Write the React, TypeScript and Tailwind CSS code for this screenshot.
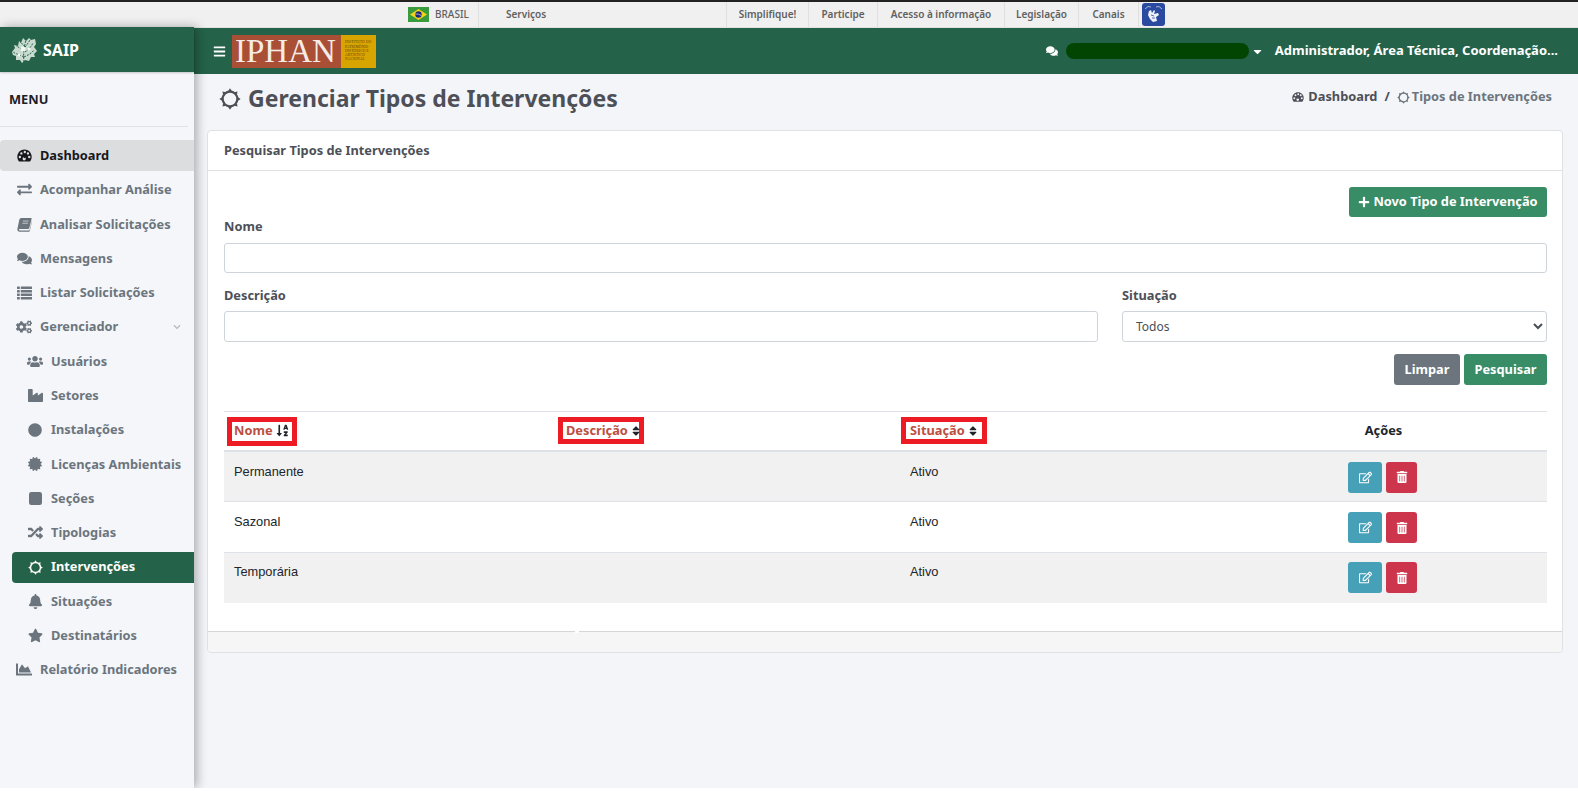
import type { ReactNode } from "react";
import {
  FaBars,
  FaBell,
  FaCertificate,
  FaChartArea,
  FaCircle,
  FaCogs,
  FaComments,
  FaExchangeAlt,
  FaIndustry,
  FaPlus,
  FaRandom,
  FaRegEdit,
  FaSort,
  FaSortAlphaDown,
  FaStar,
  FaTrashAlt,
  FaUsers,
  FaCaretDown,
  FaChevronDown,
} from "react-icons/fa";

function SunIcon({ className }: { className?: string }) {
  return (
    <svg viewBox="0 0 24 24" className={className} fill="currentColor">
      <circle cx="12" cy="12" r="8" fill="none" stroke="currentColor" strokeWidth="2.4" />
      {[0, 45, 90, 135, 180, 225, 270, 315].map((a) => (
        <path key={a} d="M9.8 3.6 L12 0.4 L14.2 3.6 Z" transform={`rotate(${a} 12 12)`} />
      ))}
    </svg>
  );
}

function GaugeIcon({ className }: { className?: string }) {
  const hole = (cx: number, cy: number, r: number) =>
    `M${cx - r} ${cy} a${r} ${r} 0 1 0 ${2 * r} 0 a${r} ${r} 0 1 0 ${-2 * r} 0Z `;
  const d =
    "M12 2.5 C5.6 2.5 .5 7.6 .5 14 c0 2.6 .9 5 2.4 7 .3 .4 .7 .5 1.1 .5 h16 c.4 0 .8 -.1 1.1 -.5 1.5 -2 2.4 -4.4 2.4 -7 C23.5 7.6 18.4 2.5 12 2.5Z " +
    hole(4.6, 14.5, 1.9) +
    hole(7, 8.6, 1.9) +
    hole(12.5, 6.4, 1.9) +
    hole(17.5, 8.6, 1.9) +
    hole(19.6, 14.5, 1.9) +
    hole(11.5, 17.2, 2.6);
  return (
    <svg viewBox="0 0 24 24" className={className} fill="currentColor">
      <path fillRule="evenodd" d={d} />
      <path d="M10.6 15.5 L13 9 L14 9.4 L12.6 16.2 Z" />
    </svg>
  );
}

function BookIcon({ className }: { className?: string }) {
  return (
    <svg viewBox="0 0 24 24" className={className} fill="currentColor">
      <path d="M7 1.5 H22.5 C23.3 1.5 23.6 2.1 23.4 2.8 L19.6 18 C19.4 18.8 18.9 19.2 18 19.2 H4.5 C3.4 19.2 3.1 19.8 3.2 20.4 C3.3 21 3.9 21.4 4.8 21.4 H20 L23.8 6 L24 6.8 L20.5 22.3 C20.3 23 19.8 23.4 19 23.4 H4.5 C2 23.4 .4 21.7 .6 19 L3.7 4.5 C4.1 2.6 5.3 1.5 7 1.5Z" />
      <path d="M9.5 6.5 H18.5 M8.5 10 H17.5" stroke="#f4f6fa" strokeWidth="1" />
    </svg>
  );
}

function ListIcon({ className }: { className?: string }) {
  return (
    <svg viewBox="0 0 24 24" className={className} fill="currentColor">
      {[2.5, 8, 13.5, 19].map((y) => (
        <g key={y}>
          <rect x="0" y={y} width="4.5" height="4" rx="0.6" />
          <rect x="6" y={y} width="18" height="4" rx="0.6" />
        </g>
      ))}
    </svg>
  );
}

function RoundSquareIcon({ className }: { className?: string }) {
  return (
    <svg viewBox="0 0 14 14" className={className} fill="currentColor">
      <rect width="14" height="14" rx="2.5" />
    </svg>
  );
}

function LeafLogo() {
  return (
    <svg viewBox="0 0 26 26" className="h-[26px] w-[26px]">
      <path
        d="M1 15 L4 11 L3 8 L7 9 L8 4 L10 6 L12 1 L15 4 L18 1 L20 3 L24 2 L25 7 L23 10 L26 14 L23 17 L24 20 L20 20 L18 24 L14 23 L11 26 L9 23 L5 23 L5 19 L2 18 Z"
        fill="#c9dbd1"
      />
      <path
        d="M13 25 C12 18 13 10 15 3 M13 20 C9 18 5 17 2 15 M13 15 C10 12 8 10 5 9 M14 10 C12 8 11 6 9 5 M13 20 C17 18 20 17 23 13 M14 15 C17 13 20 10 22 6 M14 10 C16 8 17 6 19 3"
        fill="none"
        stroke="#246349"
        strokeWidth="1"
        strokeDasharray="2 1.2"
      />
      <circle cx="12" cy="12" r="2.5" fill="#f2f7f4" />
      <circle cx="18" cy="12" r="1.5" fill="#f2f7f4" />
      <circle cx="8" cy="18" r="1.5" fill="#f2f7f4" />
    </svg>
  );
}

function FlagBrasil() {
  return (
    <svg viewBox="0 0 21 15" className="h-[15px] w-[21px]">
      <rect width="21" height="15" fill="#3a9b3c" />
      <path d="M10.5 2 L19 7.5 L10.5 13 L2 7.5 Z" fill="#f2d21b" />
      <circle cx="10.5" cy="7.5" r="3.2" fill="#1c2a78" />
      <path d="M7.5 7 Q10.5 6.6 13.4 8.6" stroke="#fff" strokeWidth="0.6" fill="none" />
    </svg>
  );
}

function HandTalk() {
  return (
    <svg viewBox="0 0 23 23" className="h-[23px] w-[23px]">
      <rect width="23" height="23" rx="3" fill="#2a4aa0" />
      <path d="M3 6 Q6 2 9 4 M14 4 Q17 2 20 6" stroke="#dfe6f7" strokeWidth="0.7" fill="none" />
      <path d="M7 8 L9 7 L10 10 L12 7 L13 8 L12 11 L16 10 L17 12 L14 14 L15 18 L11 19 L8 16 L6 12 Z" fill="#eef1fa" />
      <path d="M9 12 L12 13 M10 15 L13 15" stroke="#2a4aa0" strokeWidth="0.8" />
    </svg>
  );
}

const govLinks = [
  { label: "Simplifique!", w: "w-[82px]" },
  { label: "Participe", w: "w-[69px]" },
  { label: "Acesso à informação", w: "w-[127px]" },
  { label: "Legislação", w: "w-[74px]" },
  { label: "Canais", w: "w-[60px]" },
];

function GovBar() {
  return (
    <div className="flex h-[27px] border-t-2 border-[#222222] bg-[#f0f0f0] pl-[400px] text-[10px] font-semibold text-[#606060]">
      <div className="flex w-[79px] items-center gap-[6px] border-r border-[#dfdfdf] pl-2">
        <FlagBrasil />
        <span className="font-medium">BRASIL</span>
      </div>
      <div className="flex w-[248px] items-center border-r border-[#dfdfdf] pl-[27px]">Serviços</div>
      {govLinks.map((l) => (
        <div key={l.label} className={`flex items-center justify-center border-r border-[#dfdfdf] ${l.w}`}>
          {l.label}
        </div>
      ))}
      <div className="flex items-center pl-[3px]">
        <HandTalk />
      </div>
    </div>
  );
}

type NavItem = { label: string; icon: ReactNode; sub?: boolean; active?: boolean; current?: boolean; chevron?: boolean };

const navItems: NavItem[] = [
  { label: "Dashboard", icon: <GaugeIcon className="h-[15px] w-[15px]" />, current: true },
  { label: "Acompanhar Análise", icon: <FaExchangeAlt className="text-[15px]" /> },
  { label: "Analisar Solicitações", icon: <BookIcon className="h-[15px] w-[15px]" /> },
  { label: "Mensagens", icon: <FaComments className="text-[15px]" /> },
  { label: "Listar Solicitações", icon: <ListIcon className="h-[15px] w-[15px]" /> },
  { label: "Gerenciador", icon: <FaCogs className="text-[16px]" />, chevron: true },
  { label: "Usuários", icon: <FaUsers className="text-[17px]" />, sub: true },
  { label: "Setores", icon: <FaIndustry className="text-[15px]" />, sub: true },
  { label: "Instalações", icon: <FaCircle className="text-[14px]" />, sub: true },
  { label: "Licenças Ambientais", icon: <FaCertificate className="text-[14px]" />, sub: true },
  { label: "Seções", icon: <RoundSquareIcon className="h-[13px] w-[13px]" />, sub: true },
  { label: "Tipologias", icon: <FaRandom className="text-[15px]" />, sub: true },
  { label: "Intervenções", icon: <SunIcon className="h-[15px] w-[15px]" />, sub: true, active: true },
  { label: "Situações", icon: <FaBell className="text-[15px]" />, sub: true },
  { label: "Destinatários", icon: <FaStar className="text-[15px]" />, sub: true },
  { label: "Relatório Indicadores", icon: <FaChartArea className="text-[17px]" /> },
];

function SideNavLink({ item }: { item: NavItem }) {
  const tone = item.active
    ? "bg-[#246349] text-white"
    : item.current
      ? "bg-[#dcdddf] text-[#16181b]"
      : "text-[#6c757d]";
  return (
    <div className={`mb-[3.3px] flex h-[31px] items-center rounded-l-[4px] ${item.sub ? "ml-3 pl-[3px]" : "pl-4"} ${tone}`}>
      <span className={`flex w-[16px] justify-center ${item.sub ? "ml-[12px]" : ""}`}>{item.icon}</span>
      <span className="ml-[8px] text-[12.8px] font-bold">{item.label}</span>
      {item.chevron ? <FaChevronDown className="ml-auto mr-[13px] text-[8px] text-[#b4b8bd]" /> : null}
    </div>
  );
}

function Sidebar() {
  return (
    <aside className="relative z-10 w-[194px] shrink-0 bg-[#f4f6fa] shadow-[3px_0_10px_rgba(0,0,0,0.3)]">
      <div className="flex h-[45px] items-center gap-[6px] bg-[#246349] pl-[11px] text-white shadow-[0_1px_2px_rgba(0,0,0,0.2)]">
        <LeafLogo />
        <span className="text-[16px] font-bold">SAIP</span>
      </div>
      <div className="mr-[6px] flex h-[55px] items-center border-b border-[#dfe1e6] pl-[9px] pt-[2px] text-[12.8px] font-bold text-[#1d2027]">
        MENU
      </div>
      <nav className="pt-[13px]">
        {navItems.map((item) => (
          <SideNavLink key={item.label} item={item} />
        ))}
      </nav>
    </aside>
  );
}

function TopHeader() {
  return (
    <header className="flex h-[46px] items-center bg-[#246349] pl-[19px] pr-[20px] text-white">
      <FaBars className="text-[13px]" />
      <div className="ml-[6px] flex h-[33px] w-[144px]">
        <div className="flex w-[109px] items-center bg-[#a94f35] pl-[3px] text-[33px] leading-none text-[#f6ece6] [font-family:'Liberation_Serif',serif]">
          IPHAN
        </div>
        <div className="flex w-[35px] flex-col justify-center bg-[#d8a500] pl-[4px] text-[3.5px] leading-[4.2px] tracking-[0.2px] text-[#5b4210] [font-family:'Liberation_Serif',serif]">
          <span>INSTITUTO DO</span>
          <span>PATRIMÔNIO</span>
          <span>HISTÓRICO E</span>
          <span>ARTÍSTICO</span>
          <span>NACIONAL</span>
        </div>
      </div>
      <div className="ml-auto flex items-center">
        <FaComments className="text-[12px]" />
        <div className="ml-[8px] h-[16px] w-[183px] rounded-full bg-[#024502]" />
        <FaCaretDown className="ml-[2px] text-[13px]" />
        <span className="ml-[11px] text-[13px] font-bold">Administrador, Área Técnica, Coordenação...</span>
      </div>
    </header>
  );
}

function TitleRow() {
  return (
    <div className="flex h-[56px] items-center justify-between pb-[7px] pl-[12px] pr-[11px] text-[#4d5057]">
      <h1 className="flex items-center text-[23px] font-bold">
        <SunIcon className="mr-[7px] h-[22px] w-[22px]" />
        Gerenciar Tipos de Intervenções
      </h1>
      <div className="mb-[3px] flex items-center text-[12.8px] font-bold">
        <GaugeIcon className="mr-[4px] h-[12px] w-[12px]" />
        <span>Dashboard</span>
        <span className="mx-[7px]">/</span>
        <SunIcon className="mr-[2px] h-[13px] w-[13px] text-[#6c757d]" />
        <span className="text-[#6c757d]">Tipos de Intervenções</span>
      </div>
    </div>
  );
}

const inputClass = "w-full rounded-[3px] border border-[#ced4da] bg-white";

function SortBox({ label, icon, box, gap }: { label: string; icon: ReactNode; box: string; gap: string }) {
  return (
    <span className={`inline-flex items-center border-[5px] border-[#ed1c24] ${box}`}>
      <span className="text-[12.8px] font-bold leading-none text-[#bd4f42]">{label}</span>
      <span className={`text-[#20242a] ${gap}`}>{icon}</span>
    </span>
  );
}

const rows = [
  { nome: "Permanente", situacao: "Ativo", row: "h-[51px] bg-[#f1f1f1]", pad: "pt-[10px]" },
  { nome: "Sazonal", situacao: "Ativo", row: "h-[51px] bg-white", pad: "pt-[10px]" },
  { nome: "Temporária", situacao: "Ativo", row: "h-[50px] bg-[#f1f1f1]", pad: "pt-[9px]" },
];

function ResultTable() {
  return (
    <table className="mt-[26px] w-full table-fixed border-collapse border-t border-[#dee2e6]">
      <colgroup>
        <col className="w-[331px]" />
        <col className="w-[345px]" />
        <col className="w-[322px]" />
        <col />
      </colgroup>
      <thead>
        <tr className="h-[39px] border-b-2 border-[#dee2e6]">
          <th className="pl-[3px] text-left align-middle">
            <SortBox label="Nome" gap="ml-[3px]" box="mt-[2px] h-[29px] w-[70px] pb-[3px] pl-[2px]" icon={<FaSortAlphaDown className="text-[13px]" />} />
          </th>
          <th className="pl-[3px] text-left align-middle">
            <SortBox label="Descrição" gap="ml-[2px]" box="h-[27px] w-[86px] pl-[3px]" icon={<FaSort className="text-[12px]" />} />
          </th>
          <th className="pl-[1px] text-left align-middle">
            <SortBox label="Situação" gap="ml-[2px]" box="h-[27px] w-[86px] pl-[4px]" icon={<FaSort className="text-[12px]" />} />
          </th>
          <th className="pr-[2px] text-center align-middle text-[12.8px] font-bold text-[#212529]">Ações</th>
        </tr>
      </thead>
      <tbody className="text-[12.8px] text-[#212529] [font-family:'Liberation_Sans',sans-serif]">
        {rows.map((r) => (
          <tr key={r.nome} className={`border-t border-[#dee2e6] first:border-t-0 ${r.row}`}>
            <td className={`pl-[10px] align-top ${r.pad}`}>{r.nome}</td>
            <td />
            <td className={`pl-[10px] align-top ${r.pad}`}>{r.situacao}</td>
            <td className={`align-top ${r.pad}`}>
              <div className="flex justify-center gap-[4px] pr-[4px]">
                <button className="flex h-[31px] w-[34px] items-center justify-center rounded-[3px] bg-[#46a0b8] text-[13px] text-white">
                  <FaRegEdit />
                </button>
                <button className="flex h-[31px] w-[31px] items-center justify-center rounded-[3px] bg-[#cc354b] text-[12px] text-white">
                  <FaTrashAlt />
                </button>
              </div>
            </td>
          </tr>
        ))}
      </tbody>
    </table>
  );
}

function SearchCard() {
  return (
    <section className="rounded-[4px] border border-[#dfe1e5] bg-white">
      <div className="flex h-[40px] items-center border-b border-[#dfe1e5] pl-4 text-[12.8px] font-bold text-[#4d5057]">
        Pesquisar Tipos de Intervenções
      </div>
      <div className="pb-[28px] pl-4 pr-[15px] pt-4 text-[#4d5057]">
        <div className="flex justify-end">
          <button className="flex h-[30px] w-[198px] items-center justify-center gap-[3px] rounded-[3px] bg-[#388c66] text-[12.8px] font-bold text-white">
            <FaPlus className="text-[12px]" />
            Novo Tipo de Intervenção
          </button>
        </div>
        <label className="-mt-[1px] block text-[12.8px] font-bold leading-[20px]">Nome</label>
        <input className={`mt-[7px] h-[30px] ${inputClass}`} />
        <div className="mt-[12px] flex gap-[24px]">
          <div className="w-[874px]">
            <label className="block text-[12.8px] font-bold leading-[20px]">Descrição</label>
            <input className={`mt-[6px] h-[31px] ${inputClass}`} />
          </div>
          <div className="flex-1">
            <label className="block text-[12.8px] font-bold leading-[20px]">Situação</label>
            <select className={`mt-[6px] h-[31px] pl-[9px] text-[12px] text-[#495057] ${inputClass}`} defaultValue="Todos">
              <option>Todos</option>
            </select>
          </div>
        </div>
        <div className="mt-[12px] flex justify-end gap-[4px]">
          <button className="h-[31px] w-[66px] rounded-[3px] bg-[#6c757d] text-[12.8px] font-bold text-white">Limpar</button>
          <button className="h-[31px] w-[83px] rounded-[3px] bg-[#388c66] text-[12.8px] font-bold text-white">Pesquisar</button>
        </div>
        <ResultTable />
      </div>
      <div className="relative h-[21px] rounded-b-[4px] border-t border-[#d5d6d8] bg-[#f6f6f6]">
        <span className="absolute -top-px left-[367px] h-[2px] w-[4px] bg-white" />
      </div>
    </section>
  );
}

export default function App() {
  return (
    <div className="flex h-[788px] flex-col overflow-hidden bg-white text-[#212529] [font-family:'Noto_Sans',sans-serif]">
      <GovBar />
      <div className="flex min-h-0 flex-1">
        <Sidebar />
        <main className="min-w-0 flex-1 bg-[#f4f5f9]">
          <div className="border-t border-[#e2e2e2]">
            <TopHeader />
          </div>
          <div className="pl-[13px] pr-[15px]">
            <TitleRow />
            <SearchCard />
          </div>
        </main>
      </div>
    </div>
  );
}
